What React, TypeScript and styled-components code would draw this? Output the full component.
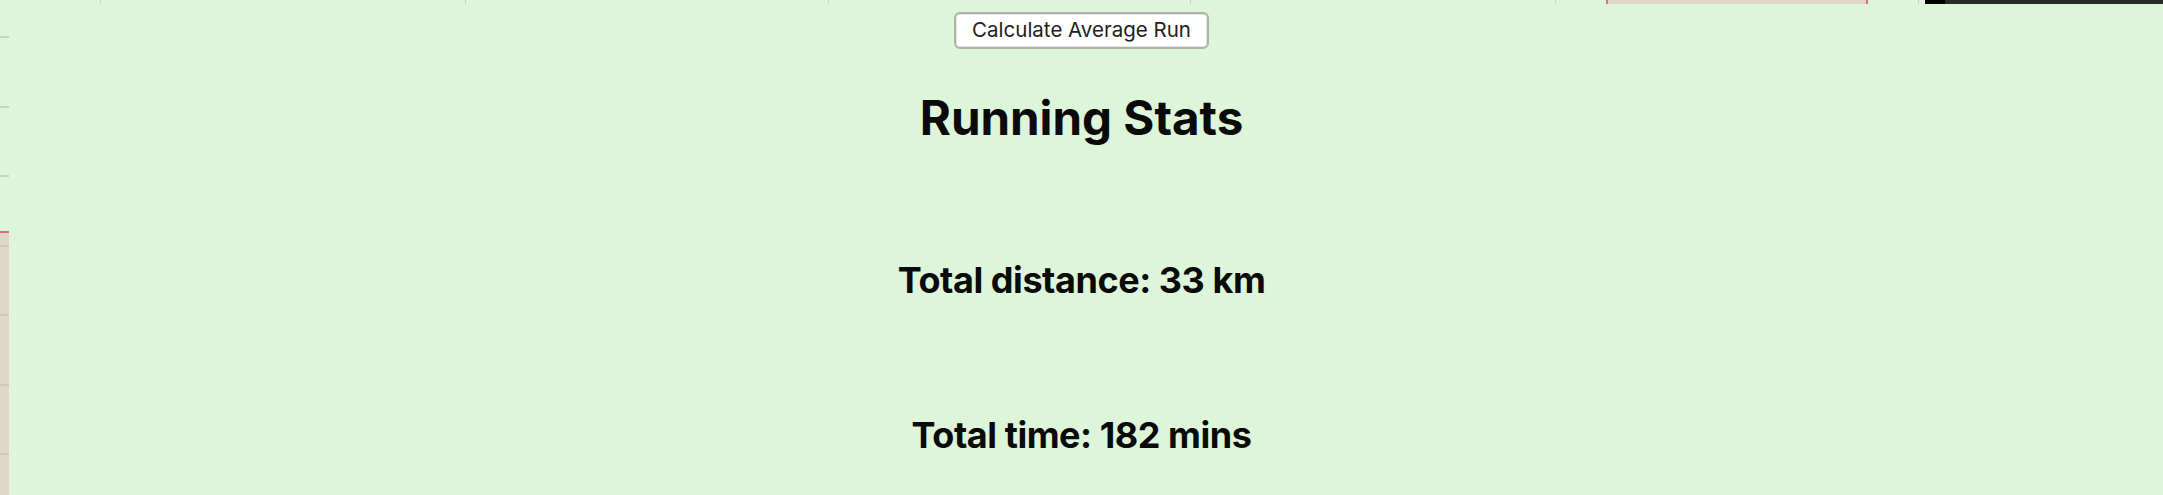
import React from "react";
import styled, { createGlobalStyle } from "styled-components";

const GlobalStyle = createGlobalStyle`
  html, body {
    margin: 0;
    padding: 0;
    background: #ddf5d8;
  }
  body {
    font-family: Inter, "Noto Sans", "Liberation Sans", sans-serif;
  }
`;

const Page = styled.div`
  position: relative;
  width: 100%;
  height: 495px;
  overflow: hidden;
  background: #ddf5d8;
`;

/* Clipped chart axes peeking in from the edges, drawn beneath the content */
const TopAxis = styled.div`
  position: absolute;
  top: 0;
  left: 0;
  right: 0;
  height: 4px;
  display: flex;
  pointer-events: none;
`;

const LeftAxis = styled.div`
  position: absolute;
  top: 0;
  left: 0;
  bottom: 0;
  width: 9px;
  display: flex;
  flex-direction: column;
  pointer-events: none;
`;

const Segment = styled.div<{ $size: number; $c: string; $vertical?: boolean }>`
  flex: 0 0 ${(p) => p.$size}px;
  background: ${(p) => p.$c};
`;

const Fill = styled.div<{ $c: string; $vertical?: boolean }>`
  flex: 1 1 auto;
  background: ${(p) => p.$c};
  display: flex;
  flex-direction: ${(p) => (p.$vertical ? "column" : "row")};
`;

const Content = styled.main`
  position: relative;
  display: flex;
  flex-direction: column;
  align-items: center;
  padding-top: 12px;
`;

const Button = styled.button`
  box-sizing: border-box;
  height: 37px;
  padding: 0 16px;
  border: 2px solid #adb3ab;
  border-radius: 6px;
  background: #ffffff;
  box-shadow: inset 0 0 0 1px #e2e5e0;
  color: #222;
  font-family: Inter, "Noto Sans", sans-serif;
  font-size: 20.5px;
  line-height: 1;
  cursor: pointer;
`;

const Title = styled.h1`
  margin: 40px 0 0;
  font-size: 47.5px;
  font-weight: 700;
  line-height: normal;
  color: #0a0a0a;
`;

const Stat = styled.h2<{ $gap: number }>`
  margin: ${(p) => p.$gap}px 0 0;
  font-size: 36px;
  font-weight: 700;
  letter-spacing: -0.45px;
  line-height: normal;
  color: #0a0a0a;
`;

const CLEAR = "transparent";
const TICK = "#c6d6c1";
const PINK = "#e26a86";
const BEIGE = "#dfd8c6";
const BEIGE_TICK = "#d0c8b6";

const topSegments: [number, string][] = [
  [100, CLEAR], [1, TICK],
  [364, CLEAR], [1, TICK],
  [362, CLEAR], [1, TICK],
  [361, CLEAR], [1, TICK],
  [364, CLEAR], [1, TICK],
  [50, CLEAR], [2, PINK],
  [258, BEIGE], [2, PINK],
  [50, CLEAR], [1, TICK],
  [6, CLEAR], [20, "#000000"],
];

const leftSegments: [number, string][] = [
  [36, CLEAR], [2, TICK],
  [68, CLEAR], [2, TICK],
  [67, CLEAR], [2, TICK],
  [54, CLEAR], [2, PINK],
];

const beigeSegments: [number, string][] = [
  [12, BEIGE], [2, BEIGE_TICK],
  [67, BEIGE], [2, BEIGE_TICK],
  [68, BEIGE], [2, BEIGE_TICK],
  [67, BEIGE], [2, BEIGE_TICK],
];

export default function App() {
  return (
    <>
      <GlobalStyle />
      <Page>
        <TopAxis>
          {topSegments.map(([w, c], i) => (
            <Segment key={i} $size={w} $c={c} />
          ))}
          <Fill $c="#2a2a2a" />
        </TopAxis>
        <LeftAxis>
          {leftSegments.map(([h, c], i) => (
            <Segment key={i} $size={h} $c={c} />
          ))}
          <Fill $c={BEIGE} $vertical>
            {beigeSegments.map(([h, c], i) => (
              <Segment key={i} $size={h} $c={c} />
            ))}
          </Fill>
        </LeftAxis>
        <Content>
          <Button type="button">Calculate Average Run</Button>
          <Title>Running Stats</Title>
          <Stat $gap={112}>Total distance: 33 km</Stat>
          <Stat $gap={111}>Total time: 182 mins</Stat>
        </Content>
      </Page>
    </>
  );
}
